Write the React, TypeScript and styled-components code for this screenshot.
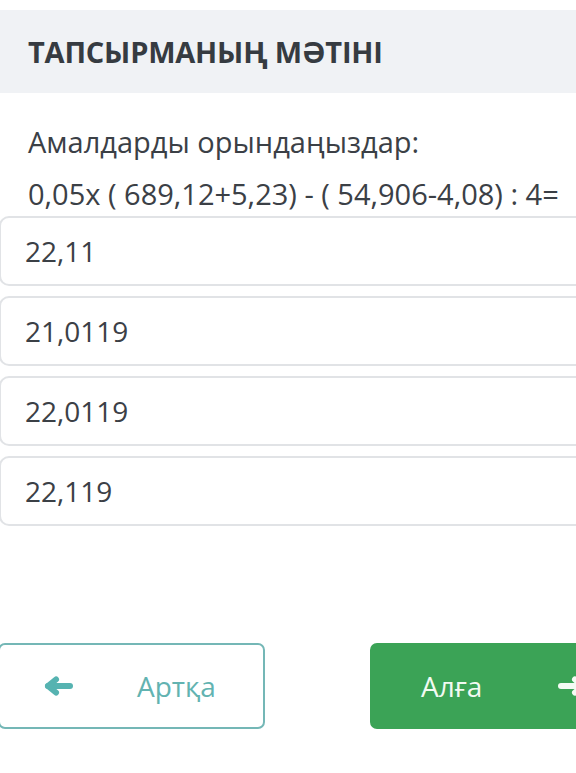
//Fundamentals
import React from "react";
import styled, { createGlobalStyle } from "styled-components";

//~~~~~~~~~~~~~~~~~~~Interfaces & Types
interface ArrowProps {
  direction: "left" | "right";
  color: string;
}

//~~~~~~~~~~~~~~~~~~~Styled Components
const GlobalStyle = createGlobalStyle`
  html, body {
    margin: 0;
    padding: 0;
    background: #ffffff;
    overflow: hidden;
  }
  * {
    box-sizing: border-box;
  }
`;

const Page = styled.div`
  width: 576px;
  height: 773px;
  overflow: hidden;
  padding-top: 10px;
  font-family: "Open Sans", "Noto Sans", sans-serif;
  color: #3b4046;
`;

const Header = styled.header`
  height: 83px;
  background-color: #f0f2f5;
  display: flex;
  align-items: center;
  padding-left: 28px;

  & > h1 {
    margin: 0;
    font-size: 29px;
    font-weight: 700;
    color: #363b41;
    letter-spacing: -0.2px;
  }
`;

const Question = styled.section`
  padding: 27px 0 0 28px;
  display: flex;
  flex-direction: column;
  gap: 8px;
`;

const QuestionLine = styled.p`
  margin: 0;
  font-size: 29px;
  line-height: 44px;
  white-space: nowrap;
`;

const Options = styled.ul`
  list-style: none;
  margin: 0 0 0 -1px;
  padding: 0;
  width: 620px;
  display: flex;
  flex-direction: column;
  gap: 10px;
`;

const Option = styled.li`
  height: 70px;
  border: 2px solid #e1e3e6;
  border-radius: 10px;
  display: flex;
  align-items: center;
  padding-left: 24px;
  font-size: 28px;
`;

const Footer = styled.footer`
  margin-top: 117px;
  margin-left: -2px;
  display: flex;
  gap: 105px;
  width: 700px;
`;

const NavButton = styled.button<{ $primary?: boolean }>`
  height: 86px;
  width: ${({ $primary }) => ($primary ? "280px" : "267px")};
  border-radius: 7px;
  border: 2px solid ${({ $primary }) => ($primary ? "#3ba356" : "#74b7b6")};
  background-color: ${({ $primary }) => ($primary ? "#3ba356" : "#ffffff")};
  color: ${({ $primary }) => ($primary ? "#f2faf2" : "#62b3b1")};
  font-family: "Open Sans", "Noto Sans", sans-serif;
  font-size: 28px;
  display: flex;
  align-items: center;
  padding: 0 0 0 ${({ $primary }) => ($primary ? "49px" : "44px")};
  gap: ${({ $primary }) => ($primary ? "75px" : "63px")};
  cursor: pointer;

  & > svg {
    width: 30px;
    height: 20px;
    flex-shrink: 0;
  }
`;

//~~~~~~~~~~~~~~~~~~~Component
const Arrow = ({ direction, color }: ArrowProps): JSX.Element => (
  <svg viewBox="0 0 30 20">
    <g
      transform={direction === "right" ? "translate(30 0) scale(-1 1)" : undefined}
      fill="none"
      stroke={color}
      strokeWidth={6}
      strokeLinecap="round"
      strokeLinejoin="round"
    >
      <path d="M4 10 H26" />
      <path d="M12 3.5 L4 10 L12 16.5" />
    </g>
  </svg>
);

const answers = ["22,11", "21,0119", "22,0119", "22,119"];

const App = (): JSX.Element => {
  //~~~~~~~~~~~~~~~~~~~Render
  return (
    <>
      <GlobalStyle />
      <Page>
        <Header>
          <h1>ТАПСЫРМАНЫҢ МӘТІНІ</h1>
        </Header>
        <Question>
          <QuestionLine>Амалдарды орындаңыздар:</QuestionLine>
          <QuestionLine>0,05x ( 689,12+5,23) - ( 54,906-4,08) : 4=</QuestionLine>
        </Question>
        <Options>
          {answers.map((a) => (
            <Option key={a}>{a}</Option>
          ))}
        </Options>
        <Footer>
          <NavButton>
            <Arrow direction="left" color="#56b3b1" />
            <span>Артқа</span>
          </NavButton>
          <NavButton $primary>
            <span>Алға</span>
            <Arrow direction="right" color="#f4fbf4" />
          </NavButton>
        </Footer>
      </Page>
    </>
  );
};

export default App;
